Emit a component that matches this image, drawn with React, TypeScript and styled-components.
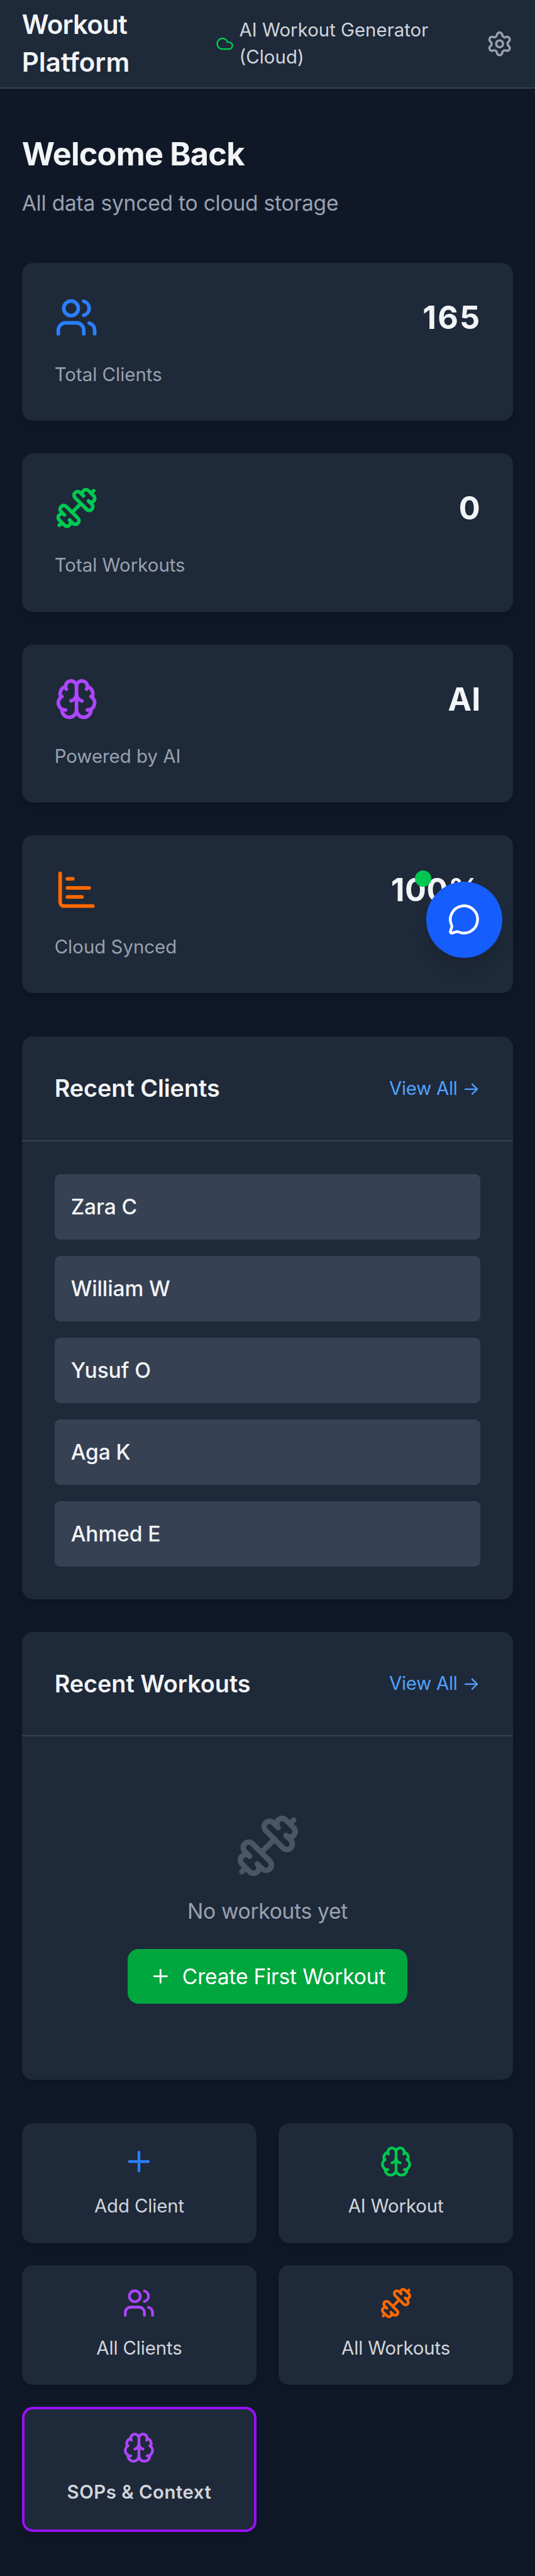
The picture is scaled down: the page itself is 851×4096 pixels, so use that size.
import React from "react";
import styled, { createGlobalStyle } from "styled-components";
import {
  Brain,
  ChartBar,
  Cloud,
  Dumbbell,
  MessageCircle,
  Plus,
  Settings,
  Users,
  type LucideIcon,
} from "lucide-react";

const color = {
  page: "#101828",
  surface: "#1e2939",
  raised: "#364153",
  faint: "#4a5565",
  muted: "#99a1af",
  soft: "#d1d5dc",
  text: "#f3f4f6",
  blue: "#2b7fff",
  link: "#51a2ff",
  green: "#00c950",
  purple: "#ad46ff",
  orange: "#ff6900",
};

const type = {
  sm: "0.849rem",
  base: "0.97rem",
  lg: "1.091rem",
  xl: "1.2125rem",
  xxl: "1.455rem",
};

const shadow = `0 0.25rem 0.375rem -0.0625rem rgba(0, 0, 0, 0.1),
    0 0.125rem 0.25rem -0.125rem rgba(0, 0, 0, 0.1)`;

/* The layout follows a 393-unit wide phone grid; 1rem is 16 of those units. */
const GlobalStyle = createGlobalStyle`
  *, *::before, *::after { box-sizing: border-box; }
  html { font-size: 34.66px; background: ${color.page}; }
  body {
    margin: 0;
    background: ${color.page};
    color: ${color.text};
    font-family: Inter, Roboto, "Liberation Sans", sans-serif;
    font-size: ${type.base};
    line-height: 1.5rem;
    -webkit-font-smoothing: antialiased;
  }
  h1, h2, h3, p { margin: 0; }
  a { color: inherit; text-decoration: none; }
  button { font: inherit; border: 0; cursor: pointer; }
`;

const Page = styled.div`
  position: relative;
  width: 100%;
  overflow: hidden;
`;

const Header = styled.header`
  display: flex;
  align-items: center;
  height: 4.0625rem;
  padding: 0 1rem;
  background: ${color.surface};
  border-bottom: 0.0625rem solid ${color.raised};
`;

const Brand = styled.h1`
  width: 8.89rem;
  font-size: ${type.xl};
  line-height: 1.75rem;
  font-weight: 600;
`;

const BrandWord = styled.span<{ $tracking: number }>`
  display: block;
  letter-spacing: ${(p) => p.$tracking}em;
`;

const SyncStatus = styled.div`
  display: flex;
  align-items: center;
  flex: 1;
  gap: 0.25rem;
  color: ${color.soft};
  font-size: ${type.sm};
  line-height: 1.25rem;
`;

const SettingsLink = styled.a`
  display: flex;
  color: ${color.muted};
`;

const Icon = styled.svg<{ $size: number; $tint?: string }>`
  display: block;
  flex: none;
  width: ${(p) => p.$size}rem;
  height: ${(p) => p.$size}rem;
  color: ${(p) => p.$tint ?? "currentColor"};
`;

const Main = styled.main`
  display: flex;
  flex-direction: column;
  gap: 2rem;
  padding: 2rem 1rem;
`;

const Welcome = styled.h2`
  font-size: ${type.xxl};
  line-height: 2rem;
  font-weight: 700;
  letter-spacing: -0.016em;
`;

const Subtitle = styled.p`
  margin-top: 0.5rem;
  color: ${color.muted};
  letter-spacing: -0.007em;
`;

const Stack = styled.div`
  display: flex;
  flex-direction: column;
  gap: 1.5rem;
`;

const Card = styled.section`
  background: ${color.surface};
  border-radius: 0.5rem;
  box-shadow: ${shadow};
`;

const StatCard = styled(Card)`
  padding: 1.5rem;
`;

const StatRow = styled.div`
  display: flex;
  align-items: center;
  justify-content: space-between;
  margin-bottom: 1rem;
`;

const StatValue = styled.span<{ $tracking: number }>`
  font-size: ${type.xxl};
  line-height: 2rem;
  font-weight: 700;
  letter-spacing: ${(p) => p.$tracking}em;
  margin-right: ${(p) => -p.$tracking / 2}em;
`;

const StatLabel = styled.p`
  color: ${color.muted};
  font-size: ${type.sm};
  line-height: 1.25rem;
`;

const PanelHeader = styled.div`
  display: flex;
  align-items: center;
  justify-content: space-between;
  padding: 1.5rem;
  border-bottom: 0.0625rem solid ${color.raised};
`;

const PanelTitle = styled.h3`
  font-size: ${type.lg};
  line-height: 1.75rem;
  font-weight: 600;
  letter-spacing: -0.0015em;
`;

const ViewAll = styled.a`
  margin-right: 0.03rem;
  color: ${color.link};
  font-size: ${type.sm};
  line-height: 1.25rem;
  letter-spacing: -0.01em;
`;

const ClientList = styled.div`
  display: flex;
  flex-direction: column;
  gap: 0.75rem;
  padding: 1.5rem;
`;

const ClientRow = styled.a`
  padding: 0.75rem;
  border-radius: 0.25rem;
  background: ${color.raised};
  font-weight: 500;
  letter-spacing: -0.004em;
`;

const EmptyState = styled.div`
  display: flex;
  flex-direction: column;
  align-items: center;
  padding: 3.5rem 1.5rem;
`;

const EmptyText = styled.p`
  margin: 0.75rem 0 1rem;
  color: ${color.muted};
  letter-spacing: -0.009em;
`;

const CreateButton = styled.button`
  display: inline-flex;
  align-items: center;
  gap: 0.5rem;
  padding: 0.5rem 1rem;
  border-radius: 0.5rem;
  background: #00a63e;
  color: #fff;
  letter-spacing: -0.006em;
  white-space: nowrap;
`;

const ActionGrid = styled.div`
  display: grid;
  grid-template-columns: 1fr 1fr;
  gap: 1rem;
`;

const ActionCard = styled.a<{ $highlight?: boolean }>`
  display: flex;
  flex-direction: column;
  align-items: center;
  gap: 0.5rem;
  padding: 1rem;
  background: ${color.surface};
  border: ${(p) => (p.$highlight ? "0.125rem solid #9810fa" : "0")};
  border-radius: 0.5rem;
  box-shadow: ${shadow};
  color: ${color.soft};
`;

const ActionLine = styled.div`
  height: 1.5rem;
`;

const ActionLabel = styled.span<{ $strong?: boolean }>`
  font-size: ${type.sm};
  font-weight: ${(p) => (p.$strong ? 600 : 400)};
  letter-spacing: ${(p) => (p.$strong ? 0.016 : -0.005)}em;
`;

const ChatButton = styled.button`
  position: absolute;
  top: 40.4375rem;
  right: 1.5rem;
  display: flex;
  align-items: center;
  justify-content: center;
  width: 3.5rem;
  height: 3.5rem;
  padding: 0;
  border-radius: 50%;
  background: #155dfc;
  color: #fff;
  box-shadow: 0 0.625rem 0.9375rem -0.1875rem rgba(0, 0, 0, 0.1),
    0 0.25rem 0.375rem -0.25rem rgba(0, 0, 0, 0.1);
`;

const OnlineDot = styled.span`
  position: absolute;
  top: -0.5rem;
  left: -0.5rem;
  width: 0.75rem;
  height: 0.75rem;
  border-radius: 50%;
  background: ${color.green};
  opacity: 0.98;
`;

type Stat = {
  icon: LucideIcon;
  tint: string;
  value: string;
  label: string;
  tracking: number;
};
type Action = { icon: LucideIcon; tint: string; label: string; highlight?: boolean };

const stats: Stat[] = [
  { icon: Users, tint: color.blue, value: "165", label: "Total Clients", tracking: 0.042 },
  { icon: Dumbbell, tint: color.green, value: "0", label: "Total Workouts", tracking: 0.02 },
  { icon: Brain, tint: color.purple, value: "AI", label: "Powered by AI", tracking: 0 },
  { icon: ChartBar, tint: color.orange, value: "100%", label: "Cloud Synced", tracking: 0.01 },
];

const clients = ["Zara C", "William W", "Yusuf O", "Aga K", "Ahmed E"];

const actions: Action[] = [
  { icon: Plus, tint: color.blue, label: "Add Client" },
  { icon: Brain, tint: color.green, label: "AI Workout" },
  { icon: Users, tint: color.purple, label: "All Clients" },
  { icon: Dumbbell, tint: color.orange, label: "All Workouts" },
  { icon: Brain, tint: color.purple, label: "SOPs & Context", highlight: true },
];

export default function App() {
  return (
    <Page>
      <GlobalStyle />
      <Header>
        <Brand>
          <BrandWord $tracking={-0.018}>Workout</BrandWord>
          <BrandWord $tracking={0}>Platform</BrandWord>
        </Brand>
        <SyncStatus>
          <Icon as={Cloud} $size={0.84} $tint={color.green} />
          <span>
            AI Workout Generator
            <br />
            (Cloud)
          </span>
        </SyncStatus>
        <SettingsLink>
          <Icon as={Settings} $size={1.25} />
        </SettingsLink>
      </Header>

      <Main>
        <div>
          <Welcome>Welcome Back</Welcome>
          <Subtitle>All data synced to cloud storage</Subtitle>
        </div>

        <Stack>
          {stats.map((s) => (
            <StatCard key={s.label}>
              <StatRow>
                <Icon as={s.icon} $size={2} $tint={s.tint} />
                <StatValue $tracking={s.tracking}>{s.value}</StatValue>
              </StatRow>
              <StatLabel>{s.label}</StatLabel>
            </StatCard>
          ))}
        </Stack>

        <Stack>
          <Card>
            <PanelHeader>
              <PanelTitle>Recent Clients</PanelTitle>
              <ViewAll>View All →</ViewAll>
            </PanelHeader>
            <ClientList>
              {clients.map((name) => (
                <ClientRow key={name}>{name}</ClientRow>
              ))}
            </ClientList>
          </Card>
          <Card>
            <PanelHeader>
              <PanelTitle>Recent Workouts</PanelTitle>
              <ViewAll>View All →</ViewAll>
            </PanelHeader>
            <EmptyState>
              <Icon as={Dumbbell} $size={3} $tint={color.faint} />
              <EmptyText>No workouts yet</EmptyText>
              <CreateButton>
                <Icon as={Plus} $size={1} />
                Create First Workout
              </CreateButton>
            </EmptyState>
          </Card>
        </Stack>

        <ActionGrid>
          {actions.map((a) => (
            <ActionCard key={a.label} $highlight={a.highlight}>
              <Icon as={a.icon} $size={1.5} $tint={a.tint} />
              <ActionLine>
                <ActionLabel $strong={a.highlight}>{a.label}</ActionLabel>
              </ActionLine>
            </ActionCard>
          ))}
        </ActionGrid>
      </Main>

      <ChatButton aria-label="Open chat">
        <Icon as={MessageCircle} $size={1.5} />
        <OnlineDot />
      </ChatButton>
    </Page>
  );
}
